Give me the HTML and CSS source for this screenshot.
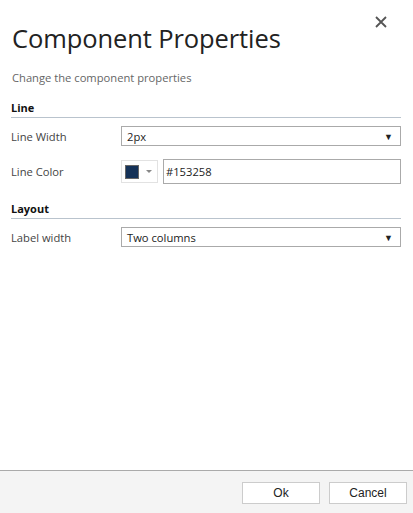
FILE: index.html
```html
<!DOCTYPE html>
<html>
<head>
<meta charset="utf-8">
<link rel="stylesheet" href="styles.css">
</head>
<body>
<div class="dialog">
  <div class="content">
    <button class="close" aria-label="Close">
      <svg width="12" height="12" viewBox="0 0 12 12"><path d="M1 1 L11 11 M11 1 L1 11" stroke="#555" stroke-width="1.8" fill="none"/></svg>
    </button>
    <h1 class="title">Component Properties</h1>
    <p class="subtitle">Change the component properties</p>

    <div class="section">
      <div class="section-head">Line</div>
      <div class="row row-width">
        <label class="label">Line Width</label>
        <div class="select"><span>2px</span><span class="caret">&#9660;</span></div>
      </div>
      <div class="row row-color">
        <label class="label">Line Color</label>
        <div class="color-field">
          <div class="swatch-btn"><span class="swatch"></span><span class="mini-caret"></span></div>
          <div class="text-input">#153258</div>
        </div>
      </div>
    </div>

    <div class="section section-layout">
      <div class="section-head">Layout</div>
      <div class="row row-width">
        <label class="label">Label width</label>
        <div class="select"><span>Two columns</span><span class="caret">&#9660;</span></div>
      </div>
    </div>
  </div>
  <div class="footer">
    <button class="btn">Ok</button>
    <button class="btn">Cancel</button>
  </div>
</div>
</body>
</html>
```
FILE: styles.css
```css
html, body {
  margin: 0;
  padding: 0;
  background: #fff;
}
body {
  font-family: "Open Sans", "Noto Sans", sans-serif;
  color: #333;
}
.dialog {
  width: 413px;
  height: 513px;
  display: flex;
  flex-direction: column;
}
.content {
  flex: 1;
  position: relative;
  padding: 0 12px 0 11px;
}
.close {
  position: absolute;
  right: 25px;
  top: 15px;
  width: 14px;
  height: 14px;
  padding: 0;
  border: 0;
  background: transparent;
  display: flex;
  align-items: center;
  justify-content: center;
}
.title {
  margin: 0;
  padding-top: 20px;
  padding-left: 1px;
  font-size: 25.5px;
  font-weight: 400;
  line-height: 36px;
  color: #222;
  letter-spacing: -0.1px;
}
.subtitle {
  margin: 14px 0 0 1px;
  font-size: 11.2px;
  line-height: 16px;
  color: #666;
}
.section {
  margin-top: 14px;
}
.section-layout {
  margin-top: 17px;
}
.section-head {
  font-size: 11px;
  font-weight: 700;
  color: #111;
  line-height: 16px;
  padding-bottom: 1px;
  border-bottom: 1px solid #b9c3cd;
}
.row {
  display: flex;
  align-items: center;
}
.row-width {
  margin-top: 8px;
}
.row-color {
  margin-top: 13px;
}
.label {
  width: 110px;
  font-size: 11.2px;
  color: #444;
}
.select {
  flex: 1;
  height: 18px;
  border: 1px solid #aaa;
  display: flex;
  align-items: center;
  justify-content: space-between;
  padding: 0 7px 0 5px;
  font-size: 11.2px;
  color: #222;
}
.caret {
  font-size: 9px;
  color: #222;
}
.color-field {
  flex: 1;
  display: flex;
  align-items: center;
  gap: 5px;
}
.swatch-btn {
  width: 37px;
  height: 23px;
  border: 1px solid #e2e2e2;
  display: flex;
  align-items: center;
  padding-left: 3px;
  box-sizing: border-box;
}
.swatch {
  width: 12px;
  height: 12px;
  background: #153258;
  border: 1px solid #666;
}
.mini-caret {
  margin-left: 7px;
  width: 0;
  height: 0;
  border-left: 3px solid transparent;
  border-right: 3px solid transparent;
  border-top: 3px solid #888;
}
.text-input {
  flex: 1;
  border: 1px solid #aaa;
  box-sizing: border-box;
  height: 25px;
  display: flex;
  align-items: center;
  padding-left: 2px;
  font-size: 11.2px;
  color: #222;
}
.footer {
  border-top: 1px solid #aaa;
  background: #f4f4f4;
  display: flex;
  justify-content: flex-end;
  align-items: flex-start;
  gap: 9px;
  padding: 11px 6px 0 0;
  box-sizing: border-box;
  height: 43px;
}
.btn {
  width: 78px;
  height: 22px;
  background: #fff;
  border: 1px solid #ccc;
  font-family: "Liberation Sans", Arial, sans-serif;
  font-size: 12px;
  color: #222;
  padding: 0;
}
```
